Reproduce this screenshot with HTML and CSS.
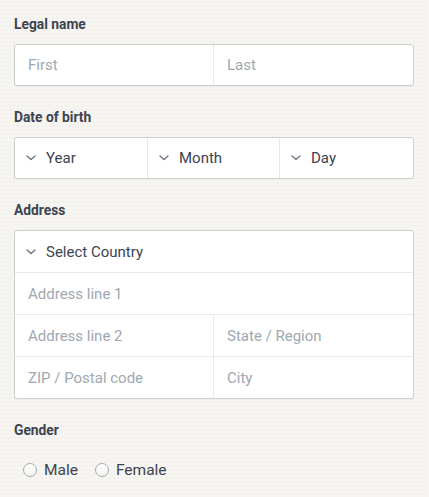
FILE: index.html
```html
<!DOCTYPE html>
<html>
<head>
<meta charset="utf-8">
<link rel="stylesheet" href="styles.css">
</head>
<body>
<form class="form">
  <div class="group">
    <div class="label">Legal name</div>
    <div class="box">
      <div class="row cols-2">
        <div class="cell ph">First</div>
        <div class="cell ph">Last</div>
      </div>
    </div>
  </div>

  <div class="group">
    <div class="label">Date of birth</div>
    <div class="box">
      <div class="row cols-3">
        <div class="cell sel"><svg class="chev" viewBox="0 0 10 6"><path d="M1 1 L5 4.6 L9 1" /></svg>Year</div>
        <div class="cell sel"><svg class="chev" viewBox="0 0 10 6"><path d="M1 1 L5 4.6 L9 1" /></svg>Month</div>
        <div class="cell sel"><svg class="chev" viewBox="0 0 10 6"><path d="M1 1 L5 4.6 L9 1" /></svg>Day</div>
      </div>
    </div>
  </div>

  <div class="group">
    <div class="label">Address</div>
    <div class="box">
      <div class="row tall">
        <div class="cell sel"><svg class="chev" viewBox="0 0 10 6"><path d="M1 1 L5 4.6 L9 1" /></svg>Select Country</div>
      </div>
      <div class="row tall">
        <div class="cell ph">Address line 1</div>
      </div>
      <div class="row tall cols-2">
        <div class="cell ph">Address line 2</div>
        <div class="cell ph">State / Region</div>
      </div>
      <div class="row tall cols-2">
        <div class="cell ph">ZIP / Postal code</div>
        <div class="cell ph">City</div>
      </div>
    </div>
  </div>

  <div class="group">
    <div class="label">Gender</div>
    <div class="radios">
      <label class="radio"><span class="dot"></span>Male</label>
      <label class="radio"><span class="dot"></span>Female</label>
    </div>
  </div>
</form>
</body>
</html>
```

FILE: styles.css
```css
html, body {
  margin: 0;
  padding: 0;
}
body {
  background-color: #f6f5f1;
  background-image: radial-gradient(circle, rgba(205, 205, 190, 0.18) 0.6px, transparent 0.9px);
  background-size: 4px 4px;
  font-family: Roboto, "Liberation Sans", sans-serif;
  color: #3d4350;
  width: 429px;
  height: 497px;
  overflow: hidden;
}
.form {
  display: flex;
  flex-direction: column;
  gap: 22px;
  padding: 15px 15px 0 14px;
}
.group {
  display: flex;
  flex-direction: column;
}
.label {
  font-size: 13.8px;
  line-height: 18px;
  font-weight: 700;
  color: #3d4350;
  margin-bottom: 11px;
}
.box {
  background: #fff;
  border: 1px solid #cfcfcf;
  border-radius: 3px;
  display: flex;
  flex-direction: column;
  box-shadow: 0 1px 0 rgba(0,0,0,0.03);
}
.row {
  display: grid;
  grid-template-columns: 1fr;
  height: 40px;
}
.row.tall {
  height: 41px;
}
.row + .row {
  border-top: 1px solid #e8e8e8;
}
.row.cols-2 {
  grid-template-columns: 198px 1fr;
}
.row.cols-3 {
  grid-template-columns: 132px 132px 1fr;
}
.cell {
  display: flex;
  align-items: center;
  padding-left: 13px;
  font-size: 15px;
}
.cell + .cell {
  border-left: 1px solid #e8e8e8;
}
.ph {
  color: #9ea8b1;
}
.sel {
  color: #3d4350;
  padding-left: 11px;
}
.chev {
  width: 10px;
  height: 6px;
  margin-right: 10px;
  fill: none;
  stroke: #6b7280;
  stroke-width: 1.3;
  stroke-linecap: round;
  stroke-linejoin: round;
}
.radios {
  display: flex;
  gap: 17px;
  padding-left: 9px;
  padding-top: 11px;
}
.radio {
  display: flex;
  align-items: center;
  font-size: 15.5px;
  color: #3d4350;
}
.dot {
  width: 12px;
  height: 12px;
  border: 1px solid #a9a9a9;
  border-radius: 50%;
  background: linear-gradient(#ffffff, #f2f2f2);
  margin-right: 7px;
  box-sizing: content-box;
}
```
